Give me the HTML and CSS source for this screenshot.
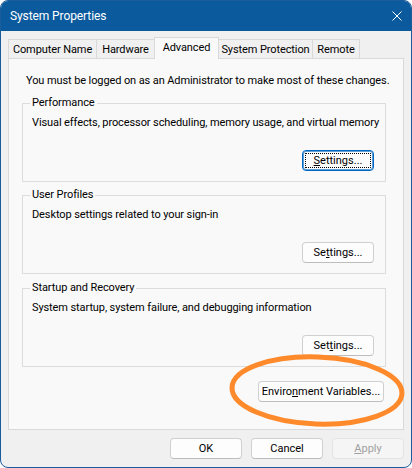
FILE: index.html
```html
<!DOCTYPE html>
<html lang="en">
<head>
  <meta charset="UTF-8" />
  <title>System Properties</title>
  <link rel="stylesheet" href="styles.css">
</head>
<body>
  <div class="window">
    <div class="titlebar">
      <span class="title">System Properties</span>
      <svg class="close" width="10" height="10" viewBox="0 0 10 10">
        <path d="M0.5 0.5 L9.5 9.5 M9.5 0.5 L0.5 9.5" stroke="#fff" stroke-width="1" fill="none" />
      </svg>
    </div>

    <div class="content">
      <div class="tabs">
        <div class="tab tab-name">Computer Name</div>
        <div class="tab tab-hardware">Hardware</div>
        <div class="tab tab-advanced tab-active">Advanced</div>
        <div class="tab tab-protection">System Protection</div>
        <div class="tab tab-remote">Remote</div>
      </div>

      <div class="panel">
        <p class="intro">You must be logged on as an Administrator to make most of these changes.</p>

        <fieldset class="group">
          <legend>Performance</legend>
          <p>Visual effects, processor scheduling, memory usage, and virtual memory</p>
          <div class="group-actions">
            <button class="btn btn-focused"><u>S</u>ettings...</button>
          </div>
        </fieldset>

        <fieldset class="group">
          <legend>User Profiles</legend>
          <p>Desktop settings related to your sign-in</p>
          <div class="group-actions">
            <button class="btn">Se<u>t</u>tings...</button>
          </div>
        </fieldset>

        <fieldset class="group group-last">
          <legend>Startup and Recovery</legend>
          <p>System startup, system failure, and debugging information</p>
          <div class="group-actions">
            <button class="btn">Set<u>t</u>ings...</button>
          </div>
        </fieldset>

        <div class="panel-actions">
          <button class="btn btn-wide">Enviro<u>n</u>ment Variables...</button>
        </div>
      </div>

      <div class="dialog-actions">
        <button class="btn">OK</button>
        <button class="btn">Cancel</button>
        <button class="btn" disabled><u>A</u>pply</button>
      </div>
    </div>

    <!-- hand-drawn highlight round the Environment Variables button -->
    <svg class="highlight" width="412" height="468" viewBox="0 0 412 468">
      <ellipse cx="317" cy="390.5" rx="85" ry="33.5" transform="rotate(2 317 390.5)"
        fill="none" stroke="#ff8a2b" stroke-width="5" />
    </svg>
  </div>
</body>
</html>
```

FILE: styles.css
```css
body {
  margin: 0;
  background: #fff;
  font-family: Roboto, "Liberation Sans", Arial, sans-serif;
  font-size: 11px;
  letter-spacing: -0.1px;
  color: #000;
}

.window {
  position: relative;
  width: 412px;
  height: 468px;
  box-sizing: border-box;
  border: 1px solid #1a5c9c;
  border-radius: 8px;
  overflow: hidden;
  background: #f0f0f0;
}

.titlebar {
  height: 30px;
  background: #0b5a9d;
  color: #fff;
  display: flex;
  align-items: center;
  justify-content: space-between;
  padding: 0 9px;
  font-size: 12px;
}

.content {
  padding: 6px 7px 0;
}

.tabs {
  display: flex;
  align-items: flex-end;
}

.tab {
  box-sizing: border-box;
  height: 19px;
  line-height: 19px;
  padding: 0;
  text-align: center;
  border: 1px solid #d9d9d9;
  border-bottom: 0;
  margin-right: -1px;
  background: #f0f0f0;
  white-space: nowrap;
}

.tab-name { width: 89px; }
.tab-hardware { width: 59px; }
.tab-advanced { width: 65px; }
.tab-protection { width: 95px; }
.tab-remote { width: 48px; }

.tab-active {
  position: relative;
  z-index: 1;
  height: 22px;
  line-height: 20px;
  margin-bottom: -1px;
  background: #f9f9f9;
}

.panel {
  box-sizing: border-box;
  height: 372px;
  border: 1px solid #d9d9d9;
  background: #f9f9f9;
  padding: 14px 17px 0 13px;
  white-space: nowrap;
}

.intro {
  margin: 0 0 6px 4px;
  line-height: 16px;
}

.group {
  margin: 0;
  min-width: 0;
  border: 1px solid #dcdcdc;
  padding: 0 11px 10px 9px;
}

.group + .group {
  margin-top: 5px;
}

.group-last {
  margin-top: 6px !important;
}

.group legend {
  padding: 0 2px;
  margin-left: -2px;
  line-height: 16px;
}

.group p {
  margin: 4px 0 0;
  line-height: 16px;
}

.group-actions {
  display: flex;
  justify-content: flex-end;
  margin-top: 19px;
}

.panel-actions {
  display: flex;
  justify-content: flex-end;
  margin-top: 14px;
  padding-right: 2px;
}

.btn {
  box-sizing: border-box;
  width: 72px;
  height: 21px;
  padding: 0;
  font: inherit;
  color: #000;
  background: #fdfdfd;
  border: 1px solid #d0d0d0;
  border-bottom-color: #bdbdbd;
  border-radius: 4px;
}

.btn-wide {
  width: 126px;
}

.btn-focused {
  border: 1px solid #0067c0;
  box-shadow: inset 0 0 0 1px #5f9fd8;
  outline: 1px dotted #000;
  outline-offset: -4px;
}

.btn:disabled {
  color: #a0a0a0;
  background: #f5f5f5;
  border-color: #e3e3e3;
}

.dialog-actions {
  display: flex;
  justify-content: flex-end;
  gap: 9px;
  margin-top: 8px;
}

.highlight {
  position: absolute;
  top: -1px;
  left: -1px;
  pointer-events: none;
}
```
